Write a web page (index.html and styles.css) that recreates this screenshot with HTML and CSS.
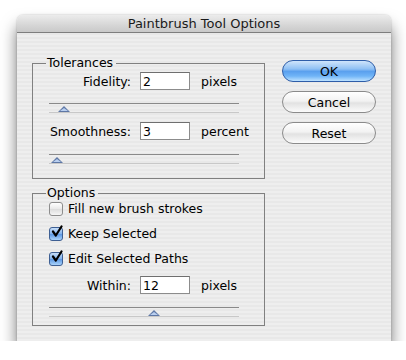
FILE: index.html
```html
<!DOCTYPE html>
<html lang="en">
<head>
  <meta charset="UTF-8">
  <title>Paintbrush Tool Options</title>
  <link rel="stylesheet" href="styles.css">
</head>
<body>
  <div class="window">
    <div class="titlebar">Paintbrush Tool Options</div>
    <div class="content">
      <div class="groups">
        <!-- Tolerances -->
        <fieldset class="group tolerances">
          <legend>Tolerances</legend>
          <div class="field">
            <label>Fidelity:</label>
            <input class="num" type="text" value="2">
            <span class="unit">pixels</span>
          </div>
          <div class="slider"><span class="thumb" style="left: 9px"></span></div>
          <div class="field">
            <label>Smoothness:</label>
            <input class="num" type="text" value="3">
            <span class="unit">percent</span>
          </div>
          <div class="slider slider-last"><span class="thumb" style="left: 2px"></span></div>
        </fieldset>

        <!-- Options -->
        <fieldset class="group options">
          <legend>Options</legend>
          <div class="check">
            <span class="box"></span>
            <span>Fill new brush strokes</span>
          </div>
          <div class="check">
            <span class="box checked">
              <svg width="14" height="14" viewBox="0 0 14 14"><path d="M3 6.5 L5.8 10.5 L11.5 1.5" fill="none" stroke="#000" stroke-width="2.2" stroke-linecap="round" stroke-linejoin="round"/></svg>
            </span>
            <span>Keep Selected</span>
          </div>
          <div class="check">
            <span class="box checked">
              <svg width="14" height="14" viewBox="0 0 14 14"><path d="M3 6.5 L5.8 10.5 L11.5 1.5" fill="none" stroke="#000" stroke-width="2.2" stroke-linecap="round" stroke-linejoin="round"/></svg>
            </span>
            <span>Edit Selected Paths</span>
          </div>
          <div class="field within">
            <label>Within:</label>
            <input class="num" type="text" value="12">
            <span class="unit">pixels</span>
          </div>
          <div class="slider slider-last"><span class="thumb" style="left: 99px"></span></div>
        </fieldset>
      </div>

      <div class="buttons">
        <button class="btn default">OK</button>
        <button class="btn">Cancel</button>
        <button class="btn">Reset</button>
      </div>
    </div>
  </div>
</body>
</html>
```

FILE: styles.css
```css
/* dialog window */
body {
  margin: 0;
  background: #ffffff;
  font-family: 'DejaVu Sans', sans-serif;
  font-size: 12.5px;
  color: #000;
}

.window {
  margin: 15px 0 0 17px;
  width: 374px;
  height: 326px;
  border-radius: 6px 6px 0 0;
  background: repeating-linear-gradient(to bottom, #eeeeee 0, #eeeeee 2px, #e8e8e8 2px, #e8e8e8 4px);
  box-shadow: 0 11px 16px rgba(0, 0, 0, 0.55), 0 0 2px rgba(0, 0, 0, 0.25);
  overflow: hidden;
}

.titlebar {
  height: 17px;
  line-height: 18px;
  text-align: center;
  font-size: 13px;
  color: #1a1a1a;
  background: linear-gradient(to bottom, #ececec, #d6d6d6 60%, #c9c9c9);
  border-bottom: 1px solid #7e7e7e;
}

.content {
  display: flex;
  padding: 23px 0 0 15px;
}

.groups {
  width: 233px;
}

/* group boxes */
.group {
  margin: 0;
  padding: 0 0 0 15px;
  border: 1px solid #808080;
}

.group legend {
  margin-left: -2px;
  padding: 0 3px 0 1px;
  line-height: 14px;
}

.tolerances {
  padding-top: 2px;
  padding-bottom: 15px;
}

.options {
  margin-top: 7px;
  padding-top: 0;
  padding-bottom: 9px;
}

.field {
  display: flex;
  align-items: center;
  height: 18px;
}

.field label {
  width: 83px;
  margin-right: 9px;
  text-align: right;
}

.num {
  box-sizing: border-box;
  width: 50px;
  height: 18px;
  margin: 0;
  padding: 0 0 0 2px;
  border: 1px solid #8c8c8c;
  border-top-color: #6f6f6f;
  background: #fff;
  font-family: inherit;
  font-size: 12.5px;
  outline: none;
}

.unit {
  margin-left: 11px;
}

/* sliders */
.slider {
  position: relative;
  width: 190px;
  height: 8px;
  margin: 13px 0 10px 1px;
  border-top: 1px solid #8a8a8a;
  box-shadow: 0 1px 0 #c8c8c8;
}

.slider-last {
  margin-bottom: 0;
  margin-top: 14px;
}

.within + .slider-last {
  margin-top: 13px;
}

.thumb {
  position: absolute;
  top: 2px;
  width: 0;
  height: 0;
  border-left: 6px solid transparent;
  border-right: 6px solid transparent;
  border-bottom: 6px solid #5f78a6;
}

.thumb::after {
  content: '';
  position: absolute;
  left: -4px;
  top: 1.5px;
  border-left: 4px solid transparent;
  border-right: 4px solid transparent;
  border-bottom: 3.5px solid #b9cff0;
}

/* checkboxes */
.check {
  display: flex;
  align-items: center;
  height: 17px;
  margin-bottom: 8px;
}

.box {
  box-sizing: border-box;
  width: 14px;
  height: 14px;
  margin: 0 5px 0 1px;
  border: 1px solid #8d8d8d;
  border-radius: 3px;
  background: linear-gradient(to bottom, #ffffff, #e9e9e9 50%, #dcdcdc 51%, #f6f6f6);
  position: relative;
}

.box.checked {
  border-color: #3e5f93;
  background: linear-gradient(to bottom, #c7def8, #7fb0ec 50%, #5b96e2 51%, #a9d3fb);
}

.box svg {
  position: absolute;
  left: 0;
  top: -3px;
}

.within {
  margin-top: 9px;
}

/* buttons */
.buttons {
  display: flex;
  flex-direction: column;
  gap: 9px;
  margin: 4px 0 0 17px;
}

.btn {
  width: 94px;
  height: 22px;
  padding: 0;
  border: 1px solid #8b8b8b;
  border-radius: 11px;
  background: linear-gradient(to bottom, #ffffff, #f2f2f2 45%, #e2e2e2 55%, #fbfbfb);
  font-family: inherit;
  font-size: 12.5px;
  color: #000;
}

.btn.default {
  border-color: #2e5da8;
  background: linear-gradient(to bottom, #cfe4fb, #8fc0f4 40%, #5aa0ee 52%, #6fb4f7 75%, #bde2ff);
}
```
